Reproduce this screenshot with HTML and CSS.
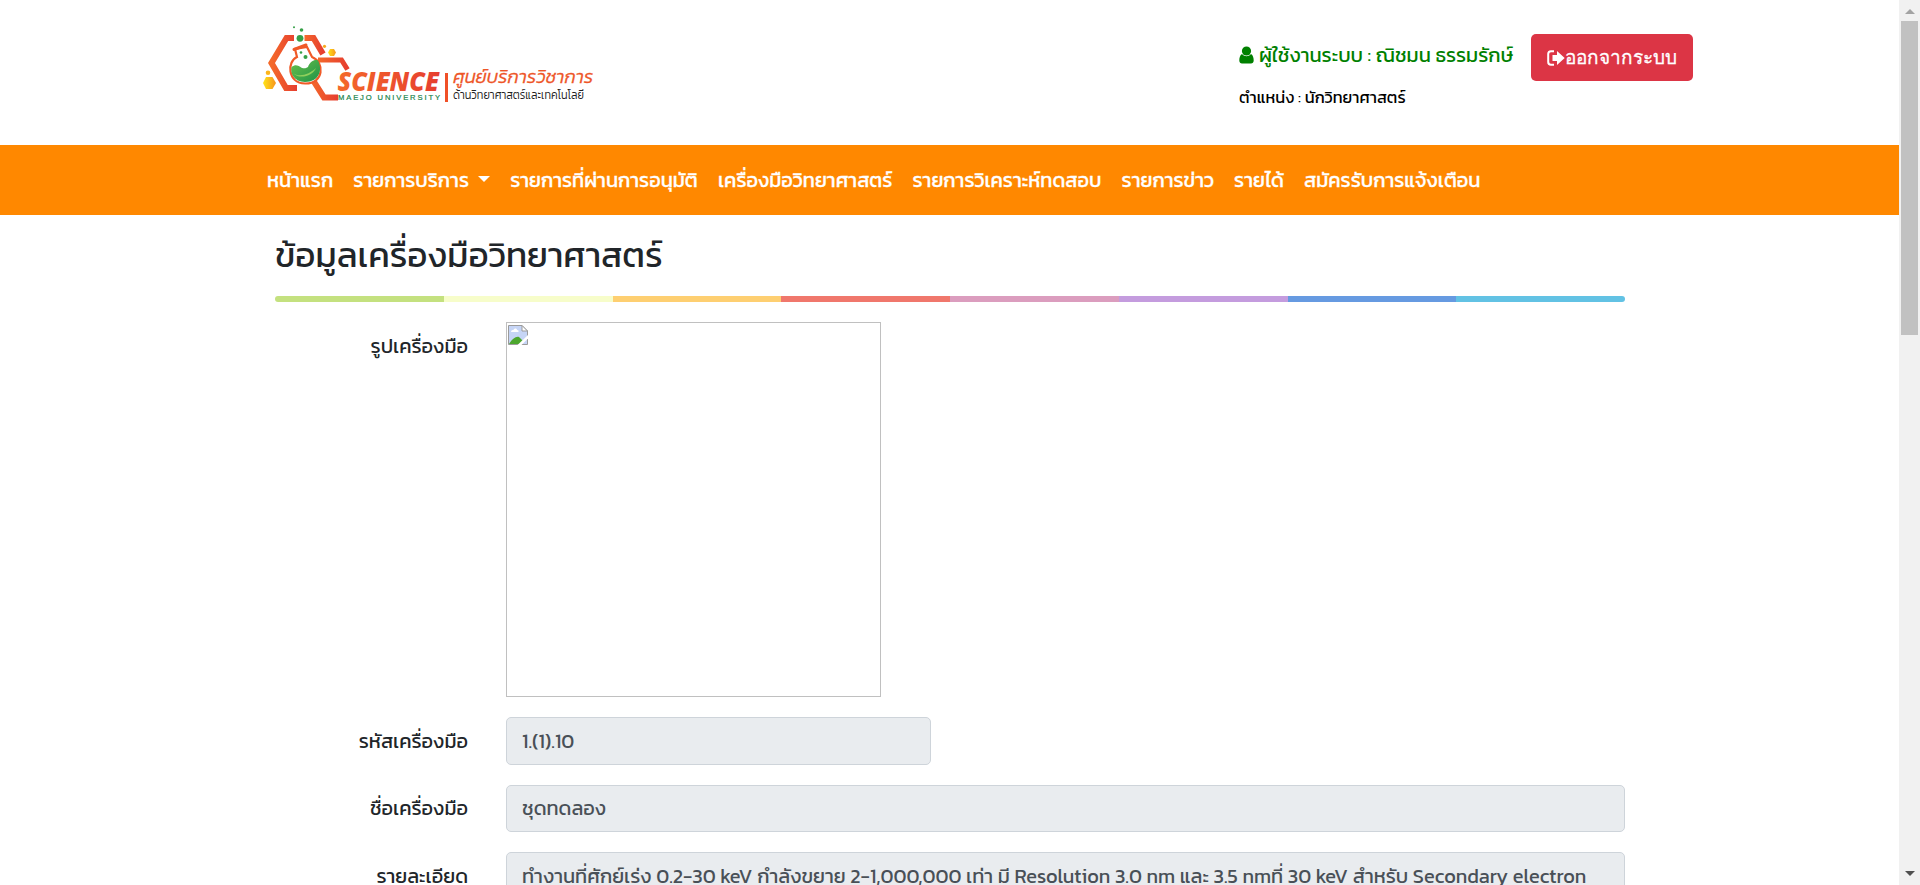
FILE: index.html
```html
<!DOCTYPE html>
<html lang="th">
<head>
<meta charset="utf-8">
<title>ข้อมูลเครื่องมือวิทยาศาสตร์</title>
<link rel="stylesheet" href="styles.css">
</head>
<body>
<div class="viewport">
  <div class="page">
    <header class="header">
      <svg class="logo" viewBox="0 0 360 100" role="img" aria-label="Science Maejo University">
        <defs>
          <linearGradient id="fire" x1="0" y1="0" x2="1" y2="0"><stop offset="0" stop-color="#f4692a"/><stop offset="1" stop-color="#e63e30"/></linearGradient>
          <linearGradient id="gold" x1="0" y1="0" x2="1" y2="0"><stop offset="0" stop-color="#ffe419"/><stop offset="1" stop-color="#f7941d"/></linearGradient>
          <linearGradient id="leaf" x1="0" y1="0" x2="1" y2="1"><stop offset="0" stop-color="#6abf4b"/><stop offset="1" stop-color="#1d9347"/></linearGradient>
        </defs>
        <path d="M44 23H36.500L21.500 48L36 73H47" fill="none" stroke="url(#fire)" stroke-width="6"/>
        <path d="M54.500 23H63.500L73 39" fill="none" stroke="url(#fire)" stroke-width="6"/>
        <path d="M97.500 54.500L91.500 45H68" fill="none" stroke="url(#fire)" stroke-width="5"/>
        <path d="M61 62L74 82.500H88" fill="none" stroke="url(#fire)" stroke-width="6"/>
        <path d="M45 34L47 42C37 46 37 68 55 68.500C74 69 75 47 62 42L57 32Z" fill="#fff" stroke="#f05a28" stroke-width="2.200"/>
        <path d="M44 34.500L56 30" stroke="#f05a28" stroke-width="3" stroke-linecap="round"/>
        <path d="M41.500 52C49 46 51 57 58 52C60 46 65 44 68 45.500C73 55 69 67 55 67C44 67 40 58 41.500 52Z" fill="url(#leaf)"/>
        <path d="M43 58C49 63 60 59 66 53C63 61 49 65 43 58Z" fill="#8fcf5c"/>
        <circle cx="50" cy="23.300" r="3.400" fill="#35a047"/><circle cx="51.500" cy="15" r="1.800" fill="#35a047"/><circle cx="44" cy="12.300" r="1" fill="#35a047"/>
        <circle cx="55.500" cy="42" r="2" fill="#35a047"/><circle cx="51" cy="37.500" r="1.300" fill="#35a047"/>
        <path d="M16 62H22.500L26 68L22.500 74H16L13 68Z" fill="url(#gold)"/>
        <path d="M80 34H84L86 37.500L84 41H80L78 37.500Z" fill="url(#gold)"/><circle cx="18" cy="57.700" r="2.300" fill="#fdb51b"/><circle cx="74.500" cy="31.300" r="1.600" fill="#f7a81d"/>
        <text class="logo-name" x="87.500" y="75.500" textLength="101.500" lengthAdjust="spacingAndGlyphs">SCIENCE</text>
        <text class="logo-university" x="88" y="85" textLength="102">MAEJO UNIVERSITY</text>
        <rect x="195" y="58" width="3" height="29" fill="#f05028"/>
        <text class="logo-center" x="203" y="68" textLength="140" lengthAdjust="spacingAndGlyphs">ศูนย์บริการวิชาการ</text>
        <text class="logo-field" x="203" y="84" textLength="131" lengthAdjust="spacingAndGlyphs">ด้านวิทยาศาสตร์และเทคโนโลยี</text>
      </svg>
      <div class="account">
        <div class="user">
          <svg class="icon-user" viewBox="0 0 15 18"><circle cx="7.500" cy="5" r="4.600"/><path d="M3 8C1 9 .3 12 .3 14.500C.3 16.500 1.500 17.500 3 17.500H12C13.500 17.500 14.700 16.500 14.700 14.500C14.700 12 14 9 12 8C9.500 11 5.500 11 3 8Z"/></svg>
          <span class="user-name">ผู้ใช้งานระบบ : ณิชมน ธรรมรักษ์</span>
        </div>
        <div class="position">ตำแหน่ง : นักวิทยาศาสตร์</div>
      </div>
      <a class="logout"><svg class="icon-exit" viewBox="0 0 18 16"><path class="door" d="M7 1.200H4Q1.200 1.200 1.200 4V12Q1.200 14.800 4 14.800H7"/><path d="M5.500 5H10V1L17.700 8L10 15V11H5.500Z"/></svg><span>ออกจากระบบ</span></a>
    </header>
    <nav class="nav">
      <a>หน้าแรก</a>
      <a>รายการบริการ<i class="caret"></i></a>
      <a>รายการที่ผ่านการอนุมัติ</a>
      <a>เครื่องมือวิทยาศาสตร์</a>
      <a>รายการวิเคราะห์ทดสอบ</a>
      <a>รายการข่าว</a>
      <a>รายได้</a>
      <a>สมัครรับการแจ้งเตือน</a>
    </nav>
    <main class="content">
      <h1>ข้อมูลเครื่องมือวิทยาศาสตร์</h1>
      <div class="rainbow"><i></i><i></i><i></i><i></i><i></i><i></i><i></i><i></i></div>
      <div class="row">
        <label>รูปเครื่องมือ</label>
        <div class="photo">
          <svg class="broken" viewBox="0 0 20 20"><path d="M.5.500H14L19.500 6V19.500H.5Z" fill="#c6d5f6" stroke="#9b9b9b"/><path d="M14 .5V6H19.500Z" fill="#fff" stroke="#9b9b9b"/><path d="M3 7C3 5 5 5 5.500 5C6 3 9 3 9 5C11 5 11 7 10 7Z" fill="#fff"/><path d="M1 19C4 14 8 11 11 12L15 16L12 19Z" fill="#4da72e"/><path d="M9.500 20L20 10V13.500L13.500 20Z" fill="#fff"/></svg>
        </div>
      </div>
      <div class="row">
        <label>รหัสเครื่องมือ</label>
        <div class="field short">1.(1).10</div>
      </div>
      <div class="row">
        <label class="raised">ชื่อเครื่องมือ</label>
        <div class="field raised">ชุดทดลอง</div>
      </div>
      <div class="row">
        <label>รายละเอียด</label>
        <div class="field tall">ทำงานที่ศักย์เร่ง 0.2-30 keV กำลังขยาย 2-1,000,000 เท่า มี Resolution 3.0 nm และ 3.5 nmที่ 30 keV สำหรับ Secondary electron</div>
      </div>
    </main>
  </div>
  <div class="scrollbar"><i class="up"></i><i class="thumb"></i><i class="down"></i></div>
</div>
</body>
</html>
```
FILE: styles.css
```css
* { box-sizing: border-box; }
body { margin: 0; background: #fff; color: #212529; font: 20px/30px Kanit, "Noto Sans Thai", Roboto, sans-serif; }
.viewport { display: flex; height: 885px; overflow: hidden; }
.page { flex: 1; min-width: 0; overflow: hidden; white-space: nowrap; }
.header { display: flex; height: 145px; padding-left: 250px; align-items: flex-start; }
.logo { width: 360px; height: 100px; margin-top: 15px; }
.logo-name { font: italic 800 27px "Open Sans", sans-serif; fill: url(#fire); }
.logo-university { font: 400 7.6px "Liberation Sans", sans-serif; fill: #16834a; stroke: #16834a; stroke-width: .2px; }
.logo-center { font-size: 18px; font-style: italic; font-weight: 300; fill: #ee5527; stroke: #ee5527; stroke-width: .3px; }
.logo-field { font-size: 12px; font-weight: 300; fill: #222; }
.account { margin: 40px 0 0 629px; width: 292px; }
.user { display: flex; align-items: center; gap: 5px; color: #008000; height: 30px; }
.icon-user { width: 15px; height: 18px; fill: #008000; }
.position { margin-top: 13px; font-size: 16.3px; line-height: 28px; color: #000; }
.logout { display: flex; align-items: center; gap: 0; width: 162px; height: 47px; margin-top: 34px; padding-left: 16px; border-radius: 5px; background: #dc3545; color: #fff; font-family: "Liberation Sans", sans-serif; font-size: 19px; -webkit-text-stroke: .3px #fff; }
.icon-exit { width: 18px; height: 16px; fill: #fff; }
.door { fill: none; stroke: #fff; stroke-width: 2; }
.nav { display: flex; gap: 20.2px; height: 70px; padding-left: 267px; align-items: center; background: #ff8800; color: #fff; -webkit-text-stroke: .3px #fff; }
.caret { display: inline-block; margin-left: 9px; vertical-align: 5px; border: 6px solid transparent; border-top-color: #fff; border-bottom: 0; }
.content { width: 1350px; margin-left: 275px; }
h1 { margin: 0; height: 81px; padding-top: 17px; font-size: 35px; line-height: 46px; font-weight: 400; }
.rainbow { display: flex; height: 6px; margin-bottom: 20px; border-radius: 3px; overflow: hidden; }
.rainbow i { flex: 1; background: #c4e17f; }
.rainbow i:nth-child(2) { background: #f7fdca; }
.rainbow i:nth-child(3) { background: #fecf71; }
.rainbow i:nth-child(4) { background: #f0776c; }
.rainbow i:nth-child(5) { background: #db9dbe; }
.rainbow i:nth-child(6) { background: #c49cde; }
.rainbow i:nth-child(7) { background: #669ae1; }
.rainbow i:nth-child(8) { background: #62c2e4; }
.row { display: flex; margin-bottom: 20px; }
label { width: 193px; margin-right: 38px; padding-top: 9px; text-align: right; }
label.raised { padding-top: 8px; }
.photo { width: 375px; height: 375px; padding: 2px 1px; border: 1px solid #c0c0c0; }
.broken { display: block; width: 20px; height: 20px; }
.field { flex: 1; height: 47px; padding: 8px 15px; border: 1px solid #ced4da; border-radius: 5px; background: #e9ecef; color: #495057; }
.field.raised { padding-top: 7px; }
.short { flex: 0 0 425px; height: 48px; }
.tall { height: 100px; }
.scrollbar { display: flex; flex-direction: column; align-items: center; width: 21px; padding: 9px 0; background: #f1f1f1; }
.up { border: 5px solid transparent; border-top: 0; border-bottom-color: #a3a3a3; }
.thumb { width: 17px; height: 314px; margin-top: 7px; background: #c1c1c1; }
.down { margin-top: auto; border: 5px solid transparent; border-bottom: 0; border-top-color: #505050; }
```
